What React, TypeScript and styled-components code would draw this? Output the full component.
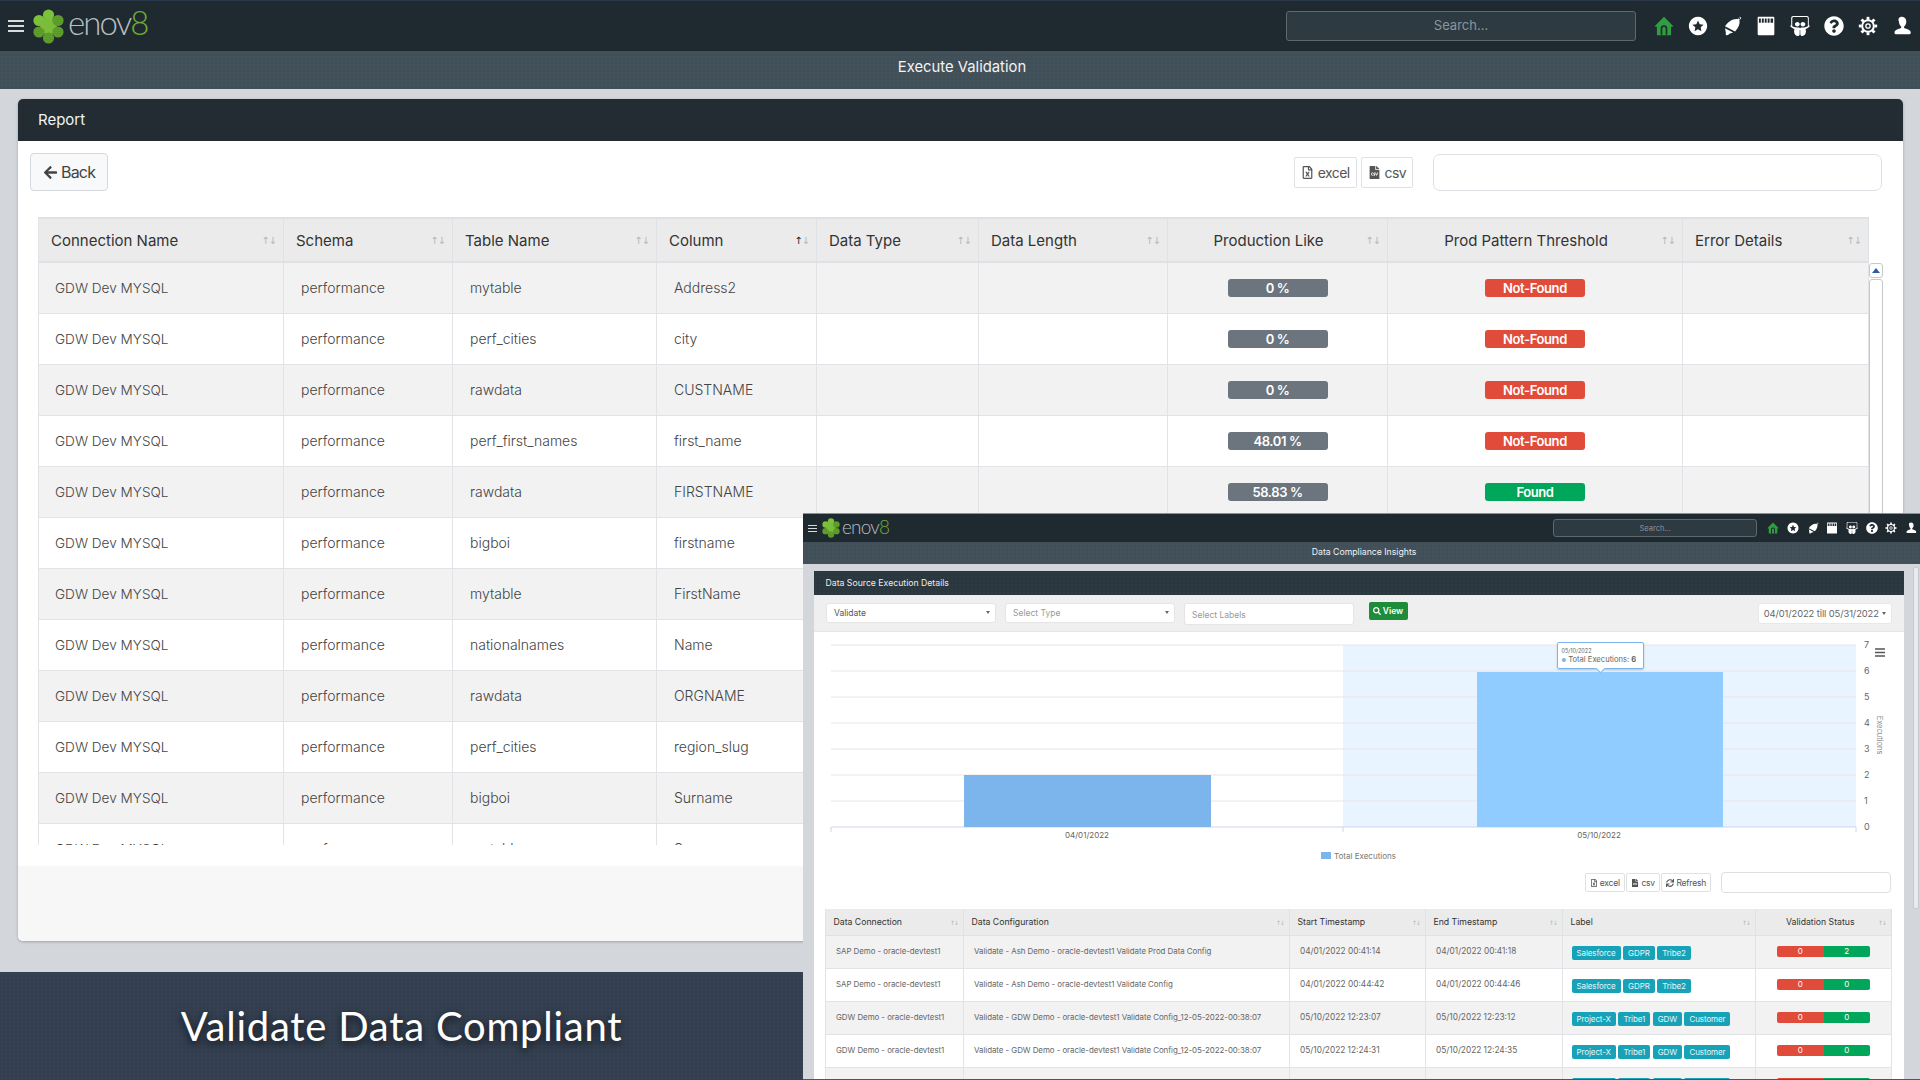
import styled, { createGlobalStyle } from 'styled-components'
import { FaArrowLeft, FaFileCsv, FaQuestionCircle, FaRegFileExcel, FaSearch, FaSlideshare, FaSync } from 'react-icons/fa'

const font = `Inter, "Open Sans", "Liberation Sans", sans-serif`
const dots = `radial-gradient(rgba(255,255,255,.025) .7px, transparent .8px)`

const GlobalStyle = createGlobalStyle`
  html, body {
    margin: 0;
    width: 1920px;
    height: 1080px;
    overflow: hidden;
    background: #d3d6db;
    font-family: ${font};
  }
  * { box-sizing: border-box; }
`

const ui = {
  Page: styled.div`
    position: relative;
    width: 1920px;
    height: 1080px;
    overflow: hidden;
    background: #d3d6db;
  `,

  Nav: styled.div<{ $small?: boolean }>`
    display: flex;
    align-items: center;
    height: ${({ $small }) => ($small ? 29 : 51)}px;
    padding: ${({ $small }) => ($small ? '0 0 0 5px' : '0 0 0 8px')};
    background: #1f2930;
    border-top: 1px solid ${({ $small }) => ($small ? '#8a9096' : '#2b3a4a')};
  `,
  Burger: styled.div<{ $small?: boolean }>`
    width: ${({ $small }) => ($small ? 9 : 16)}px;
    height: ${({ $small }) => ($small ? 7 : 12)}px;
    margin-right: ${({ $small }) => ($small ? 5 : 9)}px;
    border-top: ${({ $small }) => ($small ? 1 : 2)}px solid #d8dadc;
    border-bottom: ${({ $small }) => ($small ? 1 : 2)}px solid #d8dadc;
    position: relative;
    &::after {
      content: '';
      position: absolute;
      left: 0;
      right: 0;
      top: calc(50% - ${({ $small }) => ($small ? 0.5 : 1)}px);
      height: ${({ $small }) => ($small ? 1 : 2)}px;
      background: #d8dadc;
    }
  `,
  LogoWord: styled.div<{ $small?: boolean }>`
    font-family: Lato, ${font};
    font-weight: 300;
    font-size: ${({ $small }) => ($small ? 19 : 33)}px;
    line-height: 1;
    letter-spacing: ${({ $small }) => ($small ? -0.8 : -1.9)}px;
    margin: ${({ $small }) => ($small ? '-4px 0 0 2px' : '-7px 0 0 4px')};
    color: #b9bec2;
    span { color: #6fae2f; }
  `,
  Search: styled.div<{ $small?: boolean }>`
    display: flex;
    align-items: center;
    justify-content: center;
    margin-left: auto;
    width: ${({ $small }) => ($small ? 204 : 350)}px;
    height: ${({ $small }) => ($small ? 18 : 30)}px;
    margin-right: ${({ $small }) => ($small ? 10 : 18)}px;
    padding-bottom: ${({ $small }) => ($small ? 0 : 2)}px;
    font-size: ${({ $small }) => ($small ? 7.5 : 13)}px;
    color: #8b959b;
    background: #2e3a42;
    border: 1px solid #5d686f;
    border-radius: 3px;
  `,
  IconRow: styled.div<{ $small?: boolean }>`
    display: flex;
    align-items: center;
    gap: ${({ $small }) => ($small ? 7.7 : 14)}px;
    margin-right: ${({ $small }) => ($small ? 3 : 8)}px;
    color: #fff;
    svg {
      display: block;
      width: ${({ $small }) => ($small ? 12 : 20)}px;
      height: ${({ $small }) => ($small ? 12 : 20)}px;
    }
  `,
  TitleBar: styled.div<{ $small?: boolean }>`
    display: flex;
    align-items: center;
    justify-content: center;
    height: ${({ $small }) => ($small ? 22 : 38)}px;
    padding: ${({ $small }) => ($small ? '0 0 3px 5px' : '0 0 6px 4px')};
    font-size: ${({ $small }) => ($small ? 8.7 : 14.8)}px;
    color: #f1f3f4;
    background-color: #414f58;
    background-image: ${dots};
    background-size: 4px 4px;
  `,

  Card: styled.div`
    margin: 10px 17px 0 18px;
    height: 842px;
    display: flex;
    flex-direction: column;
    background: #fff;
    border-radius: 5px;
    box-shadow: 0 1px 3px rgba(0, 0, 0, 0.25);
    overflow: hidden;
  `,
  CardHead: styled.div`
    flex: none;
    display: flex;
    align-items: center;
    height: 42px;
    padding: 0 0 2px 20px;
    font-size: 15px;
    color: #f2f3f4;
    background: #232b33;
  `,
  Toolbar: styled.div`
    flex: none;
    display: flex;
    align-items: center;
    height: 38px;
    margin-top: 12px;
    padding: 0 21px 0 12px;
  `,
  BackButton: styled.button`
    display: flex;
    align-items: center;
    gap: 3px;
    width: 78px;
    height: 38px;
    padding: 0 12px;
    font: 400 16px ${font};
    letter-spacing: -0.8px;
    color: #444;
    background: #f8f9fa;
    border: 1px solid #d5d8dc;
    border-radius: 4px;
    svg { flex: none; width: 15px; height: 15px; }
  `,
  ToolButton: styled.button<{ $small?: boolean }>`
    display: flex;
    align-items: center;
    justify-content: center;
    gap: ${({ $small }) => ($small ? 2 : 4)}px;
    height: ${({ $small }) => ($small ? 19 : 31)}px;
    padding: 0 ${({ $small }) => ($small ? 4 : 6)}px;
    margin-left: ${({ $small }) => ($small ? 1.5 : 4)}px;
    font: 400 ${({ $small }) => ($small ? 8.5 : 14)}px ${font};
    letter-spacing: ${({ $small }) => ($small ? -0.2 : -0.6)}px;
    color: #555;
    background: #fff;
    border: 1px solid #dfe1e4;
    border-radius: 2px;
    white-space: nowrap;
    svg { flex: none; width: ${({ $small }) => ($small ? 8 : 13)}px; height: ${({ $small }) => ($small ? 8 : 13)}px; }
  `,
  PushedRight: styled.div`
    margin-left: auto;
  `,
  FilterBox: styled.div<{ $small?: boolean }>`
    width: ${({ $small }) => ($small ? 170 : 449)}px;
    height: ${({ $small }) => ($small ? 21 : 37)}px;
    margin-left: ${({ $small }) => ($small ? 10 : 20)}px;
    background: #fff;
    border: 1px solid #dcdfe3;
    border-radius: ${({ $small }) => ($small ? 4 : 7)}px;
  `,
  TableArea: styled.div`
    flex: none;
    display: flex;
    height: 628px;
    margin: 26px 0 0 20px;
    overflow: hidden;
  `,
  Rail: styled.div`
    flex: none;
    display: flex;
    flex-direction: column;
    width: 14px;
    padding-top: 46px;
  `,
  RailButton: styled.div`
    flex: none;
    display: flex;
    align-items: flex-start;
    justify-content: center;
    padding-top: 4px;
    height: 15px;
    background: #fff;
    border: 1px solid #c5c9ce;
    border-radius: 3px;
    &::before {
      content: '';
      width: 0;
      height: 0;
      border: 4px solid transparent;
      border-top: 0;
      border-bottom: 5px solid #2a5ea8;
    }
  `,
  RailTrack: styled.div`
    flex: 1;
    margin-top: 1px;
    background: #fff;
    border: 1px solid #c5c9ce;
    border-radius: 3px;
  `,
  Table: styled.table<{ $small?: boolean }>`
    flex: none;
    align-self: flex-start;
    table-layout: fixed;
    border-collapse: separate;
    border-spacing: 0;
    width: ${({ $small }) => ($small ? 1067 : 1831)}px;
    th {
      position: relative;
      height: ${({ $small }) => ($small ? 27 : 46)}px;
      padding: 0 ${({ $small }) => ($small ? 7.5 : 12)}px;
      font-size: ${({ $small }) => ($small ? 8.7 : 15)}px;
      font-weight: 400;
      text-align: left;
      color: #333;
      background: #ebebeb;
      border-top: ${({ $small }) => ($small ? 0 : 2)}px solid #dee2e6;
      border-bottom: ${({ $small }) => ($small ? 1 : 2)}px solid #dee2e6;
      border-right: 1px solid #dee2e6;
      white-space: nowrap;
    }
    td {
      height: ${({ $small }) => ($small ? 33 : 51)}px;
      padding: 0 ${({ $small }) => ($small ? 10 : 17)}px;
      font-size: ${({ $small }) => ($small ? 7.9 : 14)}px;
      font-weight: ${({ $small }) => ($small ? 400 : 300)};
      color: ${({ $small }) => ($small ? '#666' : '#444')};
      border-bottom: 1px solid #e1e3e6;
      border-right: 1px solid #e1e3e6;
      white-space: nowrap;
    }
    th:first-child, td:first-child { border-left: 1px solid #e1e3e6; }
    tbody tr:nth-child(odd) td { background: #f2f2f2; }
    tbody tr:nth-child(even) td { background: #fff; }
  `,
  CenteredHead: styled.th`
    && {
      text-align: center;
      padding-right: 30px;
    }
  `,
  InsetCenteredHead: styled.th`
    && {
      text-align: center;
      padding-right: 14px;
    }
  `,
  Sort: styled.span<{ $small?: boolean; $up?: boolean }>`
    position: absolute;
    right: ${({ $small }) => ($small ? 5 : 7)}px;
    top: 50%;
    transform: translateY(-50%);
    font-family: "DejaVu Sans", sans-serif;
    font-size: ${({ $small }) => ($small ? 6 : 10)}px;
    letter-spacing: -1px;
    color: #b4b7ba;
    b { font-weight: 400; color: ${({ $up }) => ($up ? '#222' : 'inherit')}; }
  `,
  Pill: styled.div<{ $tone: 'grey' | 'red' | 'green' }>`
    display: flex;
    align-items: center;
    justify-content: center;
    width: 100px;
    height: 18px;
    margin: 0 auto;
    font-size: 13px;
    font-weight: 600;
    letter-spacing: -0.4px;
    color: #fff;
    border-radius: 3px;
    background: ${({ $tone }) => ({ grey: '#6c757d', red: '#e04b3a', green: '#00a65a' }[$tone])};
  `,
  Conn: styled.span`
    position: relative;
    top: -1px;
    left: -1px;
    font-size: 13.6px;
  `,
  Cell: styled.span`
    position: relative;
    top: -1px;
  `,

  Footer: styled.div`
    flex: none;
    margin-top: 21px;
    height: 75px;
    background: #f7f7f7;
  `,

  Banner: styled.div`
    position: absolute;
    left: 0;
    top: 972px;
    width: 803px;
    height: 108px;
    display: flex;
    align-items: center;
    justify-content: center;
    font-family: Lato, ${font};
    font-weight: 400;
    font-size: 40px;
    letter-spacing: 0.75px;
    color: #fff;
    text-shadow: 0 3px 9px rgba(0, 0, 0, 0.75);
    background-color: #333f50;
    background-image: ${dots};
    background-size: 4px 4px;
  `,

  Inset: styled.div`
    position: absolute;
    left: 803px;
    top: 513px;
    width: 1117px;
    height: 567px;
    overflow: hidden;
    background: #d3d6db;
    border-bottom: 1px solid #555;
  `,
  InsetScroll: styled.div`
    position: absolute;
    right: 1px;
    top: 54px;
    width: 6px;
    height: 342px;
    background: #e9ebee;
    border: 1px solid #c6cacf;
    border-radius: 2px;
  `,
  InsetCard: styled.div`
    margin: 7px 16px 0 10.5px;
    background: #fff;
    border-radius: 3px 3px 0 0;
  `,
  InsetHead: styled.div`
    display: flex;
    align-items: center;
    height: 24px;
    padding-left: 12px;
    font-size: 8.7px;
    color: #e9ecee;
    background-color: #2b373f;
    background-image: ${dots};
    background-size: 4px 4px;
  `,
  FilterBand: styled.div`
    display: flex;
    align-items: flex-start;
    gap: 9.5px;
    height: 37px;
    padding: 8px 12.5px 0 12.5px;
    background: #efefef;
    border-bottom: 1px solid #e6e6e6;
  `,
  Select: styled.div<{ $muted?: boolean; $tall?: boolean }>`
    position: relative;
    display: flex;
    align-items: ${({ $tall }) => ($tall ? 'flex-end' : 'center')};
    width: 169.5px;
    height: ${({ $tall }) => ($tall ? 21.5 : 19.5)}px;
    padding: ${({ $tall }) => ($tall ? '0 0 4px 7px' : '1px 0 0 7px')};
    font-size: 8.5px;
    color: ${({ $muted }) => ($muted ? '#999' : '#555')};
    background: #fff;
    border: 1px solid #e5e5e5;
    border-radius: 3px;
  `,
  Caret: styled.span`
    position: absolute;
    right: 5px;
    top: 7px;
    border: 2px solid transparent;
    border-top: 3px solid #666;
    border-bottom: 0;
  `,
  DateCaret: styled.span`
    border: 2.5px solid transparent;
    border-top: 3px solid #666;
    border-bottom: 0;
  `,
  ViewButton: styled.button`
    display: flex;
    align-items: center;
    justify-content: center;
    gap: 2px;
    width: 39px;
    height: 18px;
    margin: -1px 0 0 5.5px;
    padding: 0;
    font: 600 8.5px ${font};
    color: #fff;
    background: #1e8c3a;
    border: 0;
    border-radius: 2px;
    svg { width: 8px; height: 8px; }
  `,
  DatePicker: styled.div`
    display: flex;
    align-items: center;
    justify-content: center;
    gap: 3px;
    width: 133.5px;
    height: 21px;
    margin-left: auto;
    font-size: 9.4px;
    letter-spacing: -0.1px;
    color: #666;
    background: #fff;
    border: 1px solid #e8e8e8;
    border-radius: 3px;
  `,
  ChartWrap: styled.div`
    position: relative;
    height: 240px;
    svg { display: block; }
    text { font-family: ${font}; }
  `,
  Tooltip: styled.div`
    position: absolute;
    left: 743px;
    top: 10px;
    width: 87px;
    height: 27px;
    padding: 5px 0 0 4px;
    font-size: 7.6px;
    line-height: 9px;
    white-space: nowrap;
    color: #666;
    background: rgba(255, 255, 255, 0.95);
    border: 1px solid #7cb5ec;
    border-radius: 2px;
    box-shadow: 0 1px 2px rgba(0, 0, 0, 0.2);
    small { display: block; font-size: 5.5px; line-height: 7px; }
    i { font-style: normal; font-size: 5px; color: #7cb5ec; }
    &::after {
      content: '';
      position: absolute;
      left: 39px;
      bottom: -4px;
      width: 6px;
      height: 6px;
      background: #fff;
      border-right: 1px solid #7cb5ec;
      border-bottom: 1px solid #7cb5ec;
      transform: rotate(45deg);
    }
  `,
  InsetTools: styled.div`
    display: flex;
    align-items: center;
    justify-content: flex-end;
    height: 21px;
    padding-right: 13px;
  `,
  InsetTableArea: styled.div`
    margin: 16px 0 0 11.5px;
  `,
  Labels: styled.div`
    display: flex;
    gap: 2.5px;
    margin: 1px 0 0 -1.5px;
  `,
  Label: styled.span`
    padding: 0 5px;
    height: 14px;
    line-height: 14px;
    font-size: 8px;
    letter-spacing: -0.1px;
    color: #e8f6f9;
    background: #17a2b8;
    border-radius: 2px;
  `,
  Status: styled.div`
    display: flex;
    justify-content: center;
    margin-bottom: 2px;
  `,
  Count: styled.span<{ $ok?: boolean }>`
    width: 46.5px;
    height: 11px;
    line-height: 11px;
    text-align: center;
    font-size: 8px;
    color: #fff;
    background: ${({ $ok }) => ($ok ? '#00a65a' : '#e04b3a')};
    border-radius: ${({ $ok }) => ($ok ? '0 2px 2px 0' : '2px 0 0 2px')};
  `,
  Lifted: styled.span<{ $stamp?: boolean }>`
    position: relative;
    top: -1px;
    font-size: ${({ $stamp }) => ($stamp ? 8.3 : 7.9)}px;
    letter-spacing: ${({ $stamp }) => ($stamp ? 0 : -0.04)}px;
  `,
}

const mainColumns = [246, 169, 204, 160, 162, 189, 220, 295, 186]
const mainHeads = ['Connection Name', 'Schema', 'Table Name', 'Column', 'Data Type', 'Data Length', 'Production Like', 'Prod Pattern Threshold', 'Error Details']

const mainRows = [
  ['mytable', 'Address2', '0 %', 'Not-Found'],
  ['perf_cities', 'city', '0 %', 'Not-Found'],
  ['rawdata', 'CUSTNAME', '0 %', 'Not-Found'],
  ['perf_first_names', 'first_name', '48.01 %', 'Not-Found'],
  ['rawdata', 'FIRSTNAME', '58.83 %', 'Found'],
  ['bigboi', 'firstname'],
  ['mytable', 'FirstName'],
  ['nationalnames', 'Name'],
  ['rawdata', 'ORGNAME'],
  ['perf_cities', 'region_slug'],
  ['bigboi', 'Surname'],
  ['mytable', 'Surname'],
]

const insetColumns = [139, 326, 136, 137, 193, 136]
const insetHeads = ['Data Connection', 'Data Configuration', 'Start Timestamp', 'End Timestamp', 'Label', 'Validation Status']

const insetRows = [
  { conn: 'SAP Demo - oracle-devtest1', config: 'Validate - Ash Demo - oracle-devtest1 Validate Prod Data Config', start: '04/01/2022 00:41:14', end: '04/01/2022 00:41:18', labels: ['Salesforce', 'GDPR', 'Tribe2'], passed: 2 },
  { conn: 'SAP Demo - oracle-devtest1', config: 'Validate - Ash Demo - oracle-devtest1 Validate Config', start: '04/01/2022 00:44:42', end: '04/01/2022 00:44:46', labels: ['Salesforce', 'GDPR', 'Tribe2'], passed: 0 },
  { conn: 'GDW Demo - oracle-devtest1', config: 'Validate - GDW Demo - oracle-devtest1 Validate Config_12-05-2022-00:38:07', start: '05/10/2022 12:23:07', end: '05/10/2022 12:23:12', labels: ['Project-X', 'Tribe1', 'GDW', 'Customer'], passed: 0 },
  { conn: 'GDW Demo - oracle-devtest1', config: 'Validate - GDW Demo - oracle-devtest1 Validate Config_12-05-2022-00:38:07', start: '05/10/2022 12:24:31', end: '05/10/2022 12:24:35', labels: ['Project-X', 'Tribe1', 'GDW', 'Customer'], passed: 0 },
  { conn: 'GDW Demo - oracle-devtest1', config: 'Validate - GDW Demo - oracle-devtest1 Validate Config_12-05-2022-00:38:07', start: '05/10/2022 12:25:02', end: '05/10/2022 12:25:06', labels: ['Project-X', 'Tribe1', 'GDW', 'Customer'], passed: 0 },
]

const Flower = ({ small }: { small?: boolean }) => {
  const id = small ? 'dotS' : 'dotL'
  return (
    <svg width={small ? 18 : 31} height={small ? 20 : 35} viewBox="0 0 31 35">
      <defs>
        <pattern id={id} width="2" height="2" patternUnits="userSpaceOnUse">
          <rect width="2" height="2" fill="#4f8f24" />
          <circle cx="1" cy="1" r=".6" fill="#8cc63f" />
        </pattern>
      </defs>
      <circle cx="15.5" cy="17.5" r="8.5" fill="#79bd38" />
      <g fill="#7cc13a">
        <circle cx="15.5" cy="6" r="5.6" />
        <circle cx="6" cy="11.5" r="5.6" />
      </g>
      <g fill={`url(#${id})`}>
        <circle cx="25" cy="11.5" r="5.6" />
        <circle cx="25" cy="23" r="5.6" />
        <circle cx="15.5" cy="29" r="5.6" />
        <circle cx="6" cy="23" r="5.6" />
      </g>
      <circle cx="13" cy="15" r="6" fill="#79bd38" />
    </svg>
  )
}

const HomeIcon = () => (
  <svg viewBox="0 0 24 24">
    <path fill="#2f9e41" fillRule="evenodd" d="M12 1 L23.5 12.5 L20.5 13 V23 H3.5 V13 L.5 12.5 Z M8 22.5 H10 V15 a2 2 0 0 1 4 0 V22.5 H16 V15 a4 4 0 0 0 -8 0 Z" />
  </svg>
)
const StarIcon = () => (
  <svg viewBox="0 0 24 24">
    <path fill="currentColor" fillRule="evenodd" d="M12 1 a11 11 0 1 0 .01 0 Z M12 5.5 l2 4.3 4.7 .6 -3.5 3.2 .9 4.7 -4.1 -2.3 -4.1 2.3 .9 -4.7 -3.5 -3.2 4.7 -.6 Z" />
  </svg>
)
const BellIcon = () => (
  <svg viewBox="0 0 24 24">
    <path fill="currentColor" fillRule="evenodd" d="M21.5 .8 l1.7 1.7 -2.4 2.6 c1 3.4 -.6 8.6 -5.2 13.6 L3.6 12.4 C7.5 6.5 13.6 3 18.6 3.8 Z M20.8 1.8 a.9 .9 0 1 0 .01 0 Z M3.6 14.6 l9.8 5.2 -4.6 1.6 c-.7 1.4 -2.5 2.2 -3.7 1.4 c-.8 -.6 -.8 -1.6 -.4 -2.5 Z" />
  </svg>
)
const CalendarIcon = () => (
  <svg viewBox="0 0 24 24">
    <path fill="currentColor" fillRule="evenodd" d="M2 2 Q2 1 3 1 H21 Q22 1 22 2 V22 Q22 23 21 23 H3 Q2 23 2 22 Z M3.5 3 V8 H5.8 V3 Z M7 3 V8 H9.3 V3 Z M10.5 3 V8 H12.8 V3 Z M14 3 V8 H16.3 V3 Z M17.5 3 V8 H20.5 V3 Z" />
  </svg>
)
const GearIcon = () => (
  <svg viewBox="0 0 24 24" fill="none" stroke="currentColor">
    <circle cx="12" cy="12" r="7" strokeWidth="2.4" />
    <circle cx="12" cy="12" r="2.6" strokeWidth="1.6" />
    {[0, 45, 90, 135, 180, 225, 270, 315].map(a => (
      <line key={a} x1="12" y1="4.5" x2="12" y2="1" strokeWidth="3.4" transform={`rotate(${a} 12 12)`} />
    ))}
  </svg>
)
const UserIcon = () => (
  <svg viewBox="0 0 24 24">
    <path fill="currentColor" d="M12 1 c3.4 0 5.2 2.6 5.2 5.6 c0 2.6 -1.2 5 -2.8 6.2 c-.3 1 .2 1.7 1.6 2.3 c3.2 1.2 6.5 2 6.5 5 c0 1.4 -1 1.9 -2.5 1.9 H5.5 c-1.5 0 -2.5 -.5 -2.5 -1.9 c0 -3 3.3 -3.8 6.5 -5 c1.4 -.6 1.9 -1.3 1.6 -2.3 c-1.6 -1.2 -2.8 -3.6 -2.8 -6.2 C6.8 3.6 8.6 1 12 1 Z" />
  </svg>
)

const TopBar = ({ small }: { small?: boolean }) => (
  <ui.Nav $small={small}>
    <ui.Burger $small={small} />
    <Flower small={small} />
    <ui.LogoWord $small={small}>enov<span>8</span></ui.LogoWord>
    <ui.Search $small={small}>Search...</ui.Search>
    <ui.IconRow $small={small}>
      <HomeIcon />
      <StarIcon />
      <BellIcon />
      <CalendarIcon />
      <FaSlideshare />
      <FaQuestionCircle />
      <GearIcon />
      <UserIcon />
    </ui.IconRow>
  </ui.Nav>
)

const Chart = () => {
  const ticks = [0, 1, 2, 3, 4, 5, 6, 7]
  return (
    <ui.ChartWrap>
      <svg width="1090" height="240" viewBox="0 0 1090 240">
        <rect x="529" y="13" width="513" height="182" fill="#e8f4ff" />
        {ticks.map(t => (
          <line key={t} x1="17" x2="1042" y1={195 - t * 26} y2={195 - t * 26} stroke={t === 0 ? '#ccd6eb' : '#e6e6e6'} />
        ))}
        <rect x="150" y="143" width="247" height="52" fill="#7cb5ec" />
        <rect x="663" y="40" width="246" height="155" fill="#90ccff" />
        <path d="M17 195 v5 M529 195 v5 M1042 195 v5" stroke="#ccd6eb" />
        {ticks.map(t => (
          <text key={t} x="1050" y={198 - t * 26} fontSize="9" fill="#666">{t}</text>
        ))}
        <text x="273" y="206" fontSize="8" fill="#666" textAnchor="middle">04/01/2022</text>
        <text x="785" y="206" fontSize="8" fill="#666" textAnchor="middle">05/10/2022</text>
        <text fontSize="7.5" fill="#888" textAnchor="middle" transform="translate(1063 103) rotate(90)">Executions</text>
        <path d="M1061 17 h10 M1061 20.5 h10 M1061 24 h10" stroke="#555" strokeWidth="1.6" />
        <rect x="507" y="220" width="10" height="7" fill="#7cb5ec" />
        <text x="520" y="227" fontSize="8" fill="#777">Total Executions</text>
      </svg>
      <ui.Tooltip>
        <small>05/10/2022</small>
        <i>●</i> Total Executions: <b>6</b>
      </ui.Tooltip>
    </ui.ChartWrap>
  )
}

const Inset = () => (
  <ui.Inset>
    <TopBar small />
    <ui.TitleBar $small>Data Compliance Insights</ui.TitleBar>
    <ui.InsetScroll />
    <ui.InsetCard>
      <ui.InsetHead>Data Source Execution Details</ui.InsetHead>
      <ui.FilterBand>
        <ui.Select>Validate<ui.Caret /></ui.Select>
        <ui.Select $muted>Select Type<ui.Caret /></ui.Select>
        <ui.Select $muted $tall>Select Labels</ui.Select>
        <ui.ViewButton><FaSearch />View</ui.ViewButton>
        <ui.DatePicker>04/01/2022 till 05/31/2022 <ui.DateCaret /></ui.DatePicker>
      </ui.FilterBand>
      <Chart />
      <ui.InsetTools>
        <ui.ToolButton $small><FaRegFileExcel />excel</ui.ToolButton>
        <ui.ToolButton $small><FaFileCsv />csv</ui.ToolButton>
        <ui.ToolButton $small><FaSync />Refresh</ui.ToolButton>
        <ui.FilterBox $small />
      </ui.InsetTools>
      <ui.InsetTableArea>
        <ui.Table $small>
          <colgroup>{insetColumns.map((w, i) => <col key={i} width={w} />)}</colgroup>
          <thead>
            <tr>
              {insetHeads.map((h, i) => {
                const Head = i === 5 ? ui.InsetCenteredHead : 'th'
                return (
                  <Head key={h}>
                    {h}
                    <ui.Sort $small><b>↑</b><b>↓</b></ui.Sort>
                  </Head>
                )
              })}
            </tr>
          </thead>
          <tbody>
            {insetRows.map((r, i) => (
              <tr key={i}>
                <td><ui.Lifted>{r.conn}</ui.Lifted></td>
                <td><ui.Lifted>{r.config}</ui.Lifted></td>
                <td><ui.Lifted $stamp>{r.start}</ui.Lifted></td>
                <td><ui.Lifted $stamp>{r.end}</ui.Lifted></td>
                <td>
                  <ui.Labels>{r.labels.map(l => <ui.Label key={l}>{l}</ui.Label>)}</ui.Labels>
                </td>
                <td>
                  <ui.Status>
                    <ui.Count>0</ui.Count>
                    <ui.Count $ok>{r.passed}</ui.Count>
                  </ui.Status>
                </td>
              </tr>
            ))}
          </tbody>
        </ui.Table>
      </ui.InsetTableArea>
    </ui.InsetCard>
  </ui.Inset>
)

const App = () => (
  <ui.Page>
    <GlobalStyle />
    <TopBar />
    <ui.TitleBar>Execute Validation</ui.TitleBar>

    <ui.Card>
      <ui.CardHead>Report</ui.CardHead>
      <ui.Toolbar>
        <ui.BackButton><FaArrowLeft />Back</ui.BackButton>
        <ui.PushedRight />
        <ui.ToolButton><FaRegFileExcel />excel</ui.ToolButton>
        <ui.ToolButton><FaFileCsv />csv</ui.ToolButton>
        <ui.FilterBox />
      </ui.Toolbar>

      <ui.TableArea>
        <ui.Table>
          <colgroup>{mainColumns.map((w, i) => <col key={i} width={w} />)}</colgroup>
          <thead>
            <tr>
              {mainHeads.map((h, i) => {
                const Head = i === 6 || i === 7 ? ui.CenteredHead : 'th'
                return (
                  <Head key={h}>
                    {h}
                    <ui.Sort $up={i === 3}><b>↑</b><span>↓</span></ui.Sort>
                  </Head>
                )
              })}
            </tr>
          </thead>
          <tbody>
            {mainRows.map((r, i) => (
              <tr key={i}>
                <td><ui.Conn>GDW Dev MYSQL</ui.Conn></td>
                <td><ui.Cell>performance</ui.Cell></td>
                <td><ui.Cell>{r[0]}</ui.Cell></td>
                <td><ui.Cell>{r[1]}</ui.Cell></td>
                <td />
                <td />
                <td>{r[2] && <ui.Pill $tone="grey">{r[2]}</ui.Pill>}</td>
                <td>{r[3] && <ui.Pill $tone={r[3] === 'Found' ? 'green' : 'red'}>{r[3]}</ui.Pill>}</td>
                <td />
              </tr>
            ))}
          </tbody>
        </ui.Table>
        <ui.Rail>
          <ui.RailButton />
          <ui.RailTrack />
        </ui.Rail>
      </ui.TableArea>
      <ui.Footer />
    </ui.Card>

    <ui.Banner>Validate Data Compliant</ui.Banner>
    <Inset />
  </ui.Page>
)

export default App
